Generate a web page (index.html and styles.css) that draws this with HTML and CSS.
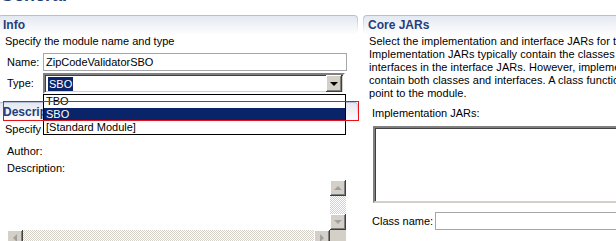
FILE: index.html
```html
<!DOCTYPE html>
<html lang="en">
<head>
    <meta charset="UTF-8">
    <title>General</title>
    <link rel="stylesheet" href="styles.css">
</head>
<body>
    <div class="title"><h1>General</h1></div>
    <div class="columns">
        <div class="column left">
            <div class="sec-head"><div class="sec-bar">Info</div></div>
            <div class="intro">Specify the module name and type</div>
            <div class="row name-row">
                <label>Name:</label>
                <div class="textbox">ZipCodeValidatorSBO</div>
            </div>
            <div class="row type-row">
                <label>Type:</label>
                <div class="combo">
                    <span class="combo-value">SBO</span>
                    <span class="combo-btn"><span class="arrow-down"></span></span>
                    <ul class="combo-list">
                        <li>TBO</li>
                        <li class="selected">SBO</li>
                        <li>[Standard Module]</li>
                    </ul>
                </div>
            </div>

            <div class="sec-head desc-head"><div class="sec-bar">Description</div></div>
            <div class="intro desc-intro">Specify the module description</div>
            <div class="field-label author">Author:</div>
            <div class="field-label descr">Description:</div>
            <div class="memo">
                <div class="memo-text"></div>
                <div class="vbar">
                    <span class="sbtn"><span class="tri tri-up"></span></span>
                    <span class="track"></span>
                    <span class="sbtn"><span class="tri tri-down"></span></span>
                </div>
                <div class="hbar">
                    <span class="sbtn"><span class="tri tri-left"></span></span>
                    <span class="track"></span>
                    <span class="sbtn"><span class="tri tri-right"></span></span>
                </div>
                <div class="corner"></div>
            </div>
            <div class="callout"></div>
        </div>

        <div class="column right">
            <div class="sec-head"><div class="sec-bar">Core JARs</div></div>
            <div class="intro paragraph">
                Select the implementation and interface JARs for this module.<br>
                Implementation JARs typically contain the classes that implement the<br>
                interfaces in the interface JARs. However, implementation JARs can<br>
                contain both classes and interfaces. A class function must also<br>
                point to the module.
            </div>
            <div class="field-label impl">Implementation JARs:</div>
            <div class="listbox"></div>
            <div class="row class-row">
                <label>Class name:</label>
                <div class="textbox"></div>
            </div>
        </div>
    </div>
</body>
</html>
```

FILE: styles.css
```css
body {
    margin: 0;
    background: #ffffff;
    font-family: "Liberation Sans", Arial, sans-serif;
    font-size: 11px;
    color: #000000;
    overflow: hidden;
    width: 616px;
    height: 241px;
}
.title {
    height: 15px;
    overflow: hidden;
}
.title h1 {
    margin: -16px 0 0 0;
    font-size: 18px;
    line-height: 22px;
    color: #1f3f7c;
}
.columns {
    display: flex;
    gap: 5px;
    width: 720px;
}
.column {
    position: relative;
}
.left {
    width: 360px;
    margin-left: -2px;
}
.right {
    width: 300px;
}

/* section title bars */
.sec-head {
    padding: 1px 1px 0;
    border-radius: 4px 4px 0 0;
    background: linear-gradient(#b3bed3, #ffffff 95%);
}
.sec-bar {
    height: 18px;
    line-height: 18px;
    padding-left: 4px;
    border-radius: 3px 3px 0 0;
    background: linear-gradient(#e4e8f1, #fdfdfe);
    font-size: 12px;
    font-weight: bold;
    color: #1f3f7c;
    white-space: nowrap;
}

.intro {
    line-height: 13px;
    margin-top: 1px;
    padding-left: 7px;
    white-space: nowrap;
}
.right .intro {
    padding-left: 6px;
    letter-spacing: 0.05px;
}

.row {
    display: flex;
    align-items: center;
    padding-left: 9px;
}
.row label {
    width: 36px;
    line-height: 13px;
    white-space: nowrap;
    flex: none;
}
.name-row {
    margin-top: 5px;
}
.textbox {
    box-sizing: border-box;
    height: 18px;
    width: 304px;
    border: 1px solid #a7a6aa;
    padding-left: 2px;
    line-height: 16px;
}

/* combo box */
.type-row {
    margin-top: 2px;
}
.combo {
    position: relative;
    box-sizing: border-box;
    width: 302px;
    height: 21px;
    border: 2px solid;
    border-color: #808080 #ffffff #ffffff #808080;
    box-shadow: inset 1px 1px #404040, inset -1px -1px #d4d0c8;
    display: flex;
    align-items: center;
    justify-content: space-between;
    padding: 0 1px 0 3px;
}
.combo-value {
    background: #0a246a;
    color: #ffffff;
    line-height: 14px;
    padding: 0 1px;
}
.combo-btn {
    box-sizing: border-box;
    width: 16px;
    height: 17px;
    background: #d4d0c8;
    box-shadow: inset -1px -1px #404040, inset 1px 1px #ffffff, inset -2px -2px #808080;
    display: flex;
    align-items: center;
    justify-content: center;
}
.arrow-down {
    border-left: 4px solid transparent;
    border-right: 4px solid transparent;
    border-top: 4px solid #000000;
}
.combo-list {
    position: absolute;
    top: 19px;
    left: -2px;
    width: 303px;
    box-sizing: border-box;
    margin: 0;
    padding: 0;
    list-style: none;
    background: #ffffff;
    border: 1px solid #000000;
    z-index: 5;
}
.combo-list li {
    height: 13px;
    line-height: 13px;
    padding-left: 2px;
}
.combo-list li.selected {
    background: #0a246a;
    color: #ffffff;
}

/* description section */
.desc-head {
    margin-top: 8px;
}
.desc-intro {
    margin-top: 2px;
}
.field-label {
    line-height: 13px;
    padding-left: 9px;
    white-space: nowrap;
}
.author {
    margin-top: 9px;
}
.descr {
    margin-top: 4px;
}
.memo {
    margin: 5px 0 0 9px;
    width: 339px;
    display: grid;
    grid-template-columns: 1fr 16px;
    grid-template-rows: 50px 16px;
}
.vbar {
    display: flex;
    flex-direction: column;
}
.hbar {
    display: flex;
}
.track {
    flex: 1;
    background: repeating-conic-gradient(#d4d0c8 0 25%, #ffffff 0 50%) 0 0 / 2px 2px;
}
.sbtn {
    box-sizing: border-box;
    width: 16px;
    height: 16px;
    flex: none;
    background: #d4d0c8;
    box-shadow: inset -1px -1px #404040, inset 1px 1px #ffffff, inset -2px -2px #808080;
    display: flex;
    align-items: center;
    justify-content: center;
}
.corner {
    background: #d4d0c8;
}
.tri {
    width: 0;
    height: 0;
}
.tri-up {
    border-left: 4px solid transparent;
    border-right: 4px solid transparent;
    border-bottom: 4px solid #a0a0a0;
}
.tri-down {
    border-left: 4px solid transparent;
    border-right: 4px solid transparent;
    border-top: 4px solid #a0a0a0;
}
.tri-left {
    border-top: 4px solid transparent;
    border-bottom: 4px solid transparent;
    border-right: 4px solid #a0a0a0;
}
.tri-right {
    border-top: 4px solid transparent;
    border-bottom: 4px solid transparent;
    border-left: 4px solid #a0a0a0;
}

/* red highlight frame */
.callout {
    position: absolute;
    top: 86px;
    left: 5px;
    width: 356px;
    height: 20px;
    box-sizing: border-box;
    border: 1px solid #e8111a;
    z-index: 10;
}

/* right column */
.impl {
    margin-top: 7px;
}
.listbox {
    margin: 6px 0 0 10px;
    height: 77px;
    box-sizing: border-box;
    border: 2px solid;
    border-color: #808080 #ffffff #d4d0c8 #808080;
    box-shadow: inset 1px 1px #404040;
}
.class-row {
    margin-top: 9px;
}
.class-row label {
    width: 63px;
}
.class-row .textbox {
    width: 240px;
}
```
